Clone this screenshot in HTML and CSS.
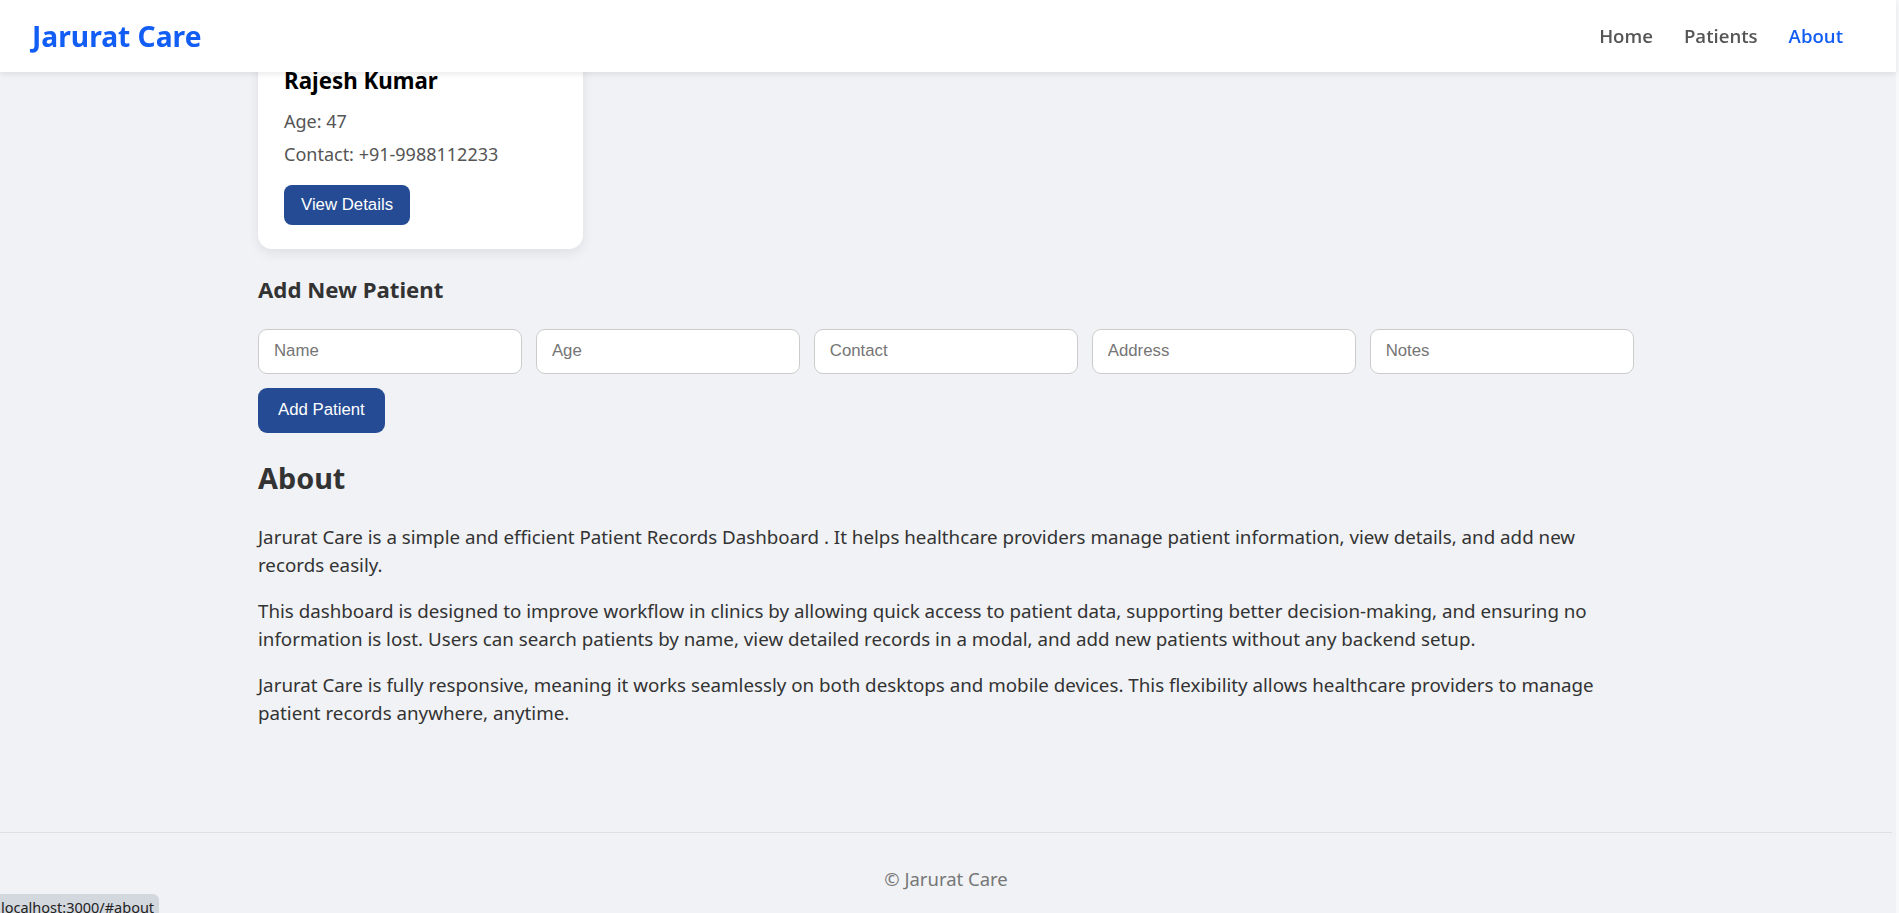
FILE: index.html
```html
<!DOCTYPE html>
<html lang="en">
<head>
<meta charset="utf-8">
<title>Jarurat Care</title>
<link rel="stylesheet" href="styles.css">
</head>
<body>
<header class="navbar">
  <a class="logo" href="#home">Jarurat Care</a>
  <nav class="nav-links">
    <a href="#home">Home</a>
    <a href="#patients">Patients</a>
    <a href="#about" class="active">About</a>
  </nav>
</header>

<div class="page">
  <main class="container">
    <section class="patients">
      <div class="card">
        <h3 class="card-name">Rajesh Kumar</h3>
        <p class="card-line">Age: 47</p>
        <p class="card-line">Contact: +91-9988112233</p>
        <button class="btn btn-sm" type="button">View Details</button>
      </div>
    </section>

    <section class="add-patient">
      <h3 class="section-title">Add New Patient</h3>
      <form class="patient-form">
        <div class="inputs">
          <input type="text" placeholder="Name">
          <input type="text" placeholder="Age">
          <input type="text" placeholder="Contact">
          <input type="text" placeholder="Address">
          <input type="text" placeholder="Notes">
        </div>
        <button class="btn btn-md" type="button">Add Patient</button>
      </form>
    </section>

    <section class="about" id="about">
      <h2 class="about-title">About</h2>
      <p>Jarurat Care is a simple and efficient Patient Records Dashboard . It helps healthcare providers manage patient information, view details, and add new records easily.</p>
      <p>This dashboard is designed to improve workflow in clinics by allowing quick access to patient data, supporting better decision-making, and ensuring no information is lost. Users can search patients by name, view detailed records in a modal, and add new patients without any backend setup.</p>
      <p>Jarurat Care is fully responsive, meaning it works seamlessly on both desktops and mobile devices. This flexibility allows healthcare providers to manage patient records anywhere, anytime.</p>
    </section>
  </main>

  <footer class="footer">© Jarurat Care</footer>
</div>

<div class="status-bar">localhost:3000/#about</div>
</body>
</html>
```
FILE: styles.css
```css
* { box-sizing: border-box; }

html {
  background: #f8f9fa;
}

body {
  margin: 0 3px 0 0;
  min-height: 100vh;
  background: #f0f2f5;
  font-family: "Noto Sans", "Open Sans", sans-serif;
  color: #333;
  overflow: hidden;
}

/* Navbar */
.navbar {
  position: fixed;
  top: 0;
  left: 0;
  right: 3px;
  height: 72px;
  z-index: 10;
  display: flex;
  align-items: center;
  justify-content: space-between;
  padding: 0 53px 0 32px;
  background: #ffffff;
  box-shadow: 0 2px 6px rgba(0, 0, 0, 0.09);
}

.logo {
  font-size: 28.2px;
  font-weight: 700;
  color: #125ef5;
  text-decoration: none;
  line-height: 1;
}

.nav-links {
  display: flex;
  gap: 31px;
}

.nav-links a {
  font-family: "Open Sans", "Noto Sans", sans-serif;
  font-size: 18.6px;
  font-weight: 600;
  color: #555;
  text-decoration: none;
  line-height: 1;
}

.nav-links a.active {
  color: #125ef5;
}

/* Layout */
.page {
  padding-right: 4px;
}

.container {
  max-width: 1376px;
  margin: 0 auto;
  padding: 42.3px 0 106px;
}

/* Card */
.patients {
  display: flex;
}

.card {
  width: 324.5px;
  padding: 24px 26px 24.6px;
  background: #fff;
  border-radius: 14px;
  box-shadow: 0 4px 12px rgba(0, 0, 0, 0.08);
}

.card-name {
  margin: 0 0 12.2px;
  font-size: 22.3px;
  line-height: 30px;
  font-weight: 700;
  color: #000;
}

.card-line {
  margin: 0 0 5.7px;
  font-size: 18px;
  line-height: 27px;
  color: #555;
}

.card-line + .btn {
  margin-top: 11.4px;
}

/* Buttons */
.btn {
  display: inline-flex;
  align-items: center;
  border: none;
  background: #244b93;
  color: #fff;
  font-family: "Liberation Sans", Arial, sans-serif;
  font-size: 16.8px;
  cursor: pointer;
}

.btn-sm {
  height: 39.4px;
  padding: 0 17px;
  border-radius: 8px;
}

.btn-md {
  height: 44.4px;
  padding: 0 20px;
  border-radius: 9px;
}

/* Add patient */
.add-patient {
  margin-top: 26.1px;
}

.section-title {
  margin: 0 0 23.3px;
  font-size: 22.2px;
  line-height: 30px;
  font-weight: 700;
  color: #333;
}

.inputs {
  display: flex;
  gap: 13.5px;
  margin-bottom: 14px;
}

.inputs input {
  flex: 1;
  min-width: 0;
  height: 45.6px;
  padding: 0 15px;
  border: 1px solid #cccccc;
  border-radius: 9px;
  background: #fff;
  font-family: "Liberation Sans", Arial, sans-serif;
  font-size: 16.8px;
  color: #333;
  outline: none;
}

.inputs input::placeholder {
  color: #757575;
}

/* About */
.about {
  margin-top: 26.1px;
}

.about-title {
  margin: 0 0 26.5px;
  font-size: 28.8px;
  line-height: 38px;
  font-weight: 700;
  color: #333;
}

.about p {
  margin: 0 0 19.2px;
  font-size: 18.75px;
  line-height: 27.4px;
  color: #333;
}

.about p:last-child {
  margin-bottom: 0;
}

/* Footer */
.footer {
  border-top: 1px solid #dcdfe4;
  padding: 33px 0 40px;
  text-align: center;
  font-size: 18.5px;
  line-height: 25px;
  color: #777;
}

/* Browser status bubble */
.status-bar {
  position: fixed;
  left: 0;
  bottom: 0;
  width: 159px;
  height: 19px;
  padding-left: 1px;
  background: #d3d7de;
  border-top-right-radius: 6px;
  font-family: "Noto Sans", sans-serif;
  font-size: 14.5px;
  line-height: 26px;
  color: #222;
  white-space: nowrap;
  overflow: hidden;
}
```
